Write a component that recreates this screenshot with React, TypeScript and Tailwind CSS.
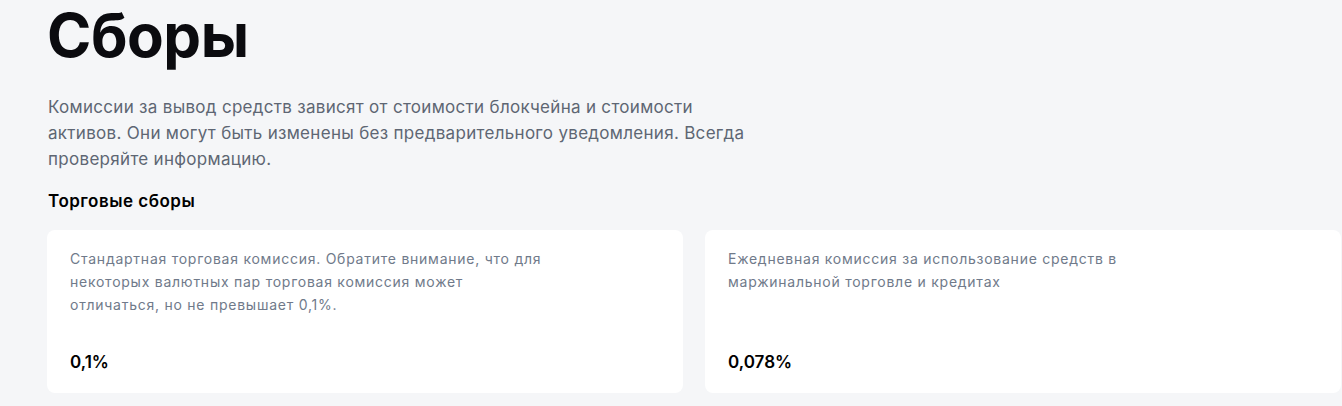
const cards = [
  {
    text: "Стандартная торговая комиссия. Обратите внимание, что для некоторых валютных пар торговая комиссия может отличаться, но не превышает 0,1%.",
    value: "0,1%",
  },
  {
    text: "Ежедневная комиссия за использование средств в маржинальной торговле и кредитах",
    value: "0,078%",
  },
];

export default function App() {
  return (
    <div className="min-h-[406px] w-[1342px] overflow-hidden bg-[#f5f6f8] pl-[47px] pr-[1px] font-['Inter',sans-serif]">
      <h1 className="pt-[5px] text-[60px] leading-[60px] font-bold tracking-[-0.5px] text-[#0b0b0f]">
        Сборы
      </h1>
      <p className="mt-[29px] max-w-[712px] pl-px text-[17px] leading-[26px] tracking-[0.3px] text-[#5e6673]">
        Комиссии за вывод средств зависят от стоимости блокчейна и стоимости
        активов. Они могут быть изменены без предварительного уведомления.
        Всегда проверяйте информацию.
      </p>
      <h2 className="mt-[17px] pl-px text-[17px] leading-[24px] font-semibold tracking-[0.5px] text-black">
        Торговые сборы
      </h2>
      <div className="mt-[17px] grid grid-cols-2 gap-[22px]">
        {cards.map((card) => (
          <div
            key={card.value}
            className="flex h-[163px] flex-col justify-between rounded-[8px] bg-white px-[23px] pt-[17px] pb-[19px]"
          >
            <p className="max-w-[478px] text-[14px] leading-[23px] tracking-[0.75px] text-[#707a8a]">
              {card.text}
            </p>
            <p className="text-[17px] leading-[24px] font-semibold text-black">
              {card.value}
            </p>
          </div>
        ))}
      </div>
    </div>
  );
}
